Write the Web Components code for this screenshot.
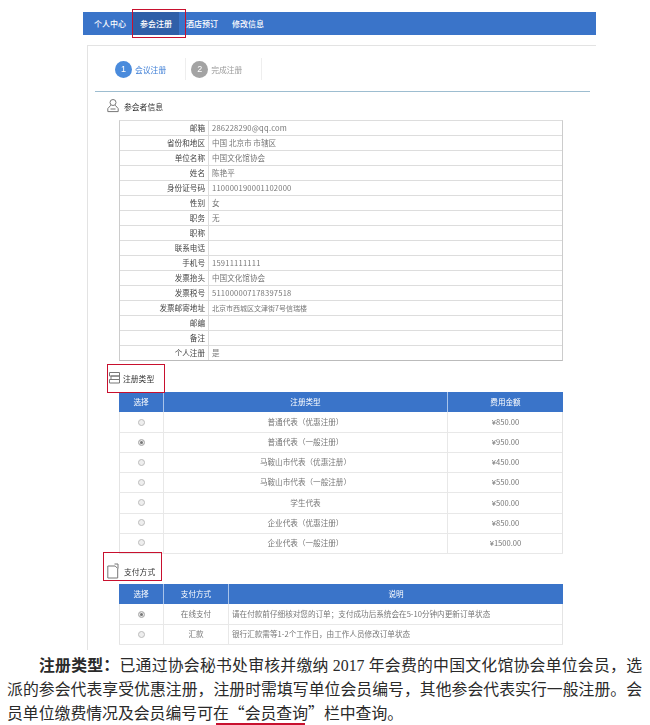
<!DOCTYPE html>
<html lang="zh">
<head>
<meta charset="utf-8">
<title>会议注册</title>
<style>
  html, body { margin: 0; background: #fff; }
  body { width: 650px; height: 725px; overflow: hidden; font-family: "Noto Sans CJK SC", "Liberation Sans", sans-serif; }
</style>
</head>
<body>
<reg-page>
  <reg-nav slot="nav">
    <nav-item>个人中心</nav-item>
    <nav-item active annotated>参会注册</nav-item>
    <nav-item>酒店预订</nav-item>
    <nav-item>修改信息</nav-item>
  </reg-nav>
  <reg-steps>
    <reg-step num="1" active>会议注册</reg-step>
    <reg-step num="2">完成注册</reg-step>
  </reg-steps>

  <section-head icon="person" style="margin-top:6px;margin-left:19px;--gap:3px">参会者信息</section-head>
  <info-table style="margin-top:6px">
    <info-row label="邮箱" wide>286228290@qq.com</info-row>
    <info-row label="省份和地区">中国 北京市 市辖区</info-row>
    <info-row label="单位名称">中国文化馆协会</info-row>
    <info-row label="姓名">陈艳平</info-row>
    <info-row label="身份证号码" wide>110000190001102000</info-row>
    <info-row label="性别">女</info-row>
    <info-row label="职务">无</info-row>
    <info-row label="职称"></info-row>
    <info-row label="联系电话"></info-row>
    <info-row label="手机号" wide>15911111111</info-row>
    <info-row label="发票抬头">中国文化馆协会</info-row>
    <info-row label="发票税号" wide>511000007178397518</info-row>
    <info-row label="发票邮寄地址" narrow>北京市西城区文津街7号信瑞楼</info-row>
    <info-row label="邮编"></info-row>
    <info-row label="备注"></info-row>
    <info-row label="个人注册">是</info-row>
  </info-table>

  <section-head icon="list" annotated="list" style="margin-top:9px;margin-left:20px;--gap:1px">注册类型</section-head>
  <data-table columns="45px 284px 115px" style="margin-top:6px">
    <data-head><span>选择</span><span>注册类型</span><span>费用金额</span></data-head>
    <data-row><reg-radio></reg-radio><span>普通代表（优惠注册）</span><span>¥850.00</span></data-row>
    <data-row><reg-radio checked></reg-radio><span>普通代表（一般注册）</span><span>¥950.00</span></data-row>
    <data-row><reg-radio></reg-radio><span>马鞍山市代表（优惠注册）</span><span>¥450.00</span></data-row>
    <data-row><reg-radio></reg-radio><span>马鞍山市代表（一般注册）</span><span>¥550.00</span></data-row>
    <data-row><reg-radio></reg-radio><span>学生代表</span><span>¥500.00</span></data-row>
    <data-row><reg-radio></reg-radio><span>企业代表（优惠注册）</span><span>¥850.00</span></data-row>
    <data-row><reg-radio></reg-radio><span>企业代表（一般注册）</span><span>¥1500.00</span></data-row>
  </data-table>

  <section-head icon="doc" annotated="doc" style="margin-top:10px;margin-left:19px;--gap:3px">支付方式</section-head>
  <data-table columns="45px 65px 334px" style="margin-top:5px">
    <data-head><span>选择</span><span>支付方式</span><span>说明</span></data-head>
    <data-row><reg-radio checked></reg-radio><span>在线支付</span><span style="text-align:left;padding-left:3px">请在付款前仔细核对您的订单；支付成功后系统会在5-10分钟内更新订单状态</span></data-row>
    <data-row><reg-radio></reg-radio><span>汇款</span><span style="text-align:left;padding-left:3px">银行汇款需等1-2个工作日，由工作人员修改订单状态</span></data-row>
  </data-table>
</reg-page>
<reg-notice>
  <b>注册类型：</b>已通过协会秘书处审核并缴纳<span style="font-family:'Liberation Serif',serif;line-height:0"> 2017 </span>年会费的中国文化馆协会单位会员，选派的参会代表享受优惠注册，注册时需填写单位会员编号，其他参会代表实行一般注册。会员单位缴费情况及会员编号可<red-mark>在“会员查询”</red-mark>栏中查询。
</reg-notice>

<script>
// Small helper, every element here is just a shadow root with its own style + markup
function defineEl(name, css, html) {
  customElements.define(name, class extends HTMLElement {
    constructor() {
      super();
      this.attachShadow({ mode: 'open' });
    }
    connectedCallback() {
      const markup = typeof html === 'function' ? html(this) : html;
      this.shadowRoot.innerHTML = `<style>${css}</style>${markup}`;
    }
  });
}

// Page shell
defineEl('reg-page', `
  :host { display: block; width: 513px; margin-left: 83px; padding-top: 12px; height: 638px; }
  .card { margin: 10px 0 0 4px; border-top: 1px solid #e3e3e3; border-left: 1px solid #e3e3e3; height: 604px; filter: blur(.25px); }
`, `<slot name="nav"></slot><div class="card"><slot></slot></div>`);

// Top navigation
defineEl('reg-nav', `
  :host { display: flex; height: 23px; background: #3a74c9; padding-left: 4px; }
`, `<slot></slot>`);

defineEl('nav-item', `
  :host { display: block; position: relative; height: 23px; line-height: 23px; padding: 0 7px; font-size: 8px; font-weight: 500; color: #fff; }
  :host([active]) { background: #2f5fa8; }
  .note { position: absolute; left: -1px; top: -3px; width: 52px; height: 27px; border: 1px solid #c8102e; }
`, el => `<slot></slot>${el.hasAttribute('annotated') ? '<i class="note"></i>' : ''}`);

// Step indicator
defineEl('reg-steps', `
  :host { display: flex; height: 45px; width: 475px; margin-left: 7px; border-bottom: 1px solid #9dbdd0; padding-left: 20px; }
`, `<slot></slot>`);

defineEl('reg-step', `
  :host { display: flex; align-items: center; height: 22px; margin-top: 12px; padding-right: 19px; margin-right: 5px; gap: 3px; font-size: 7.8px; color: #9a9a9a; border-right: 1px solid #eee; }
  :host([active]) { color: #3f7fd6; }
  b { width: 17px; height: 17px; border-radius: 50%; background: #a3a3a3; color: #fff; font: 400 9px/17px "Liberation Sans", sans-serif; text-align: center; }
  :host([active]) b { background: #4a8bdc; }
`, el => `<b>${el.getAttribute('num')}</b><slot></slot>`);

// Section heading with outline icon
const headIcons = {
  person: `<circle cx="6" cy="4.5" r="3"/><path d="M3.8 7.2.8 10.6v3h10.4v-3L8.2 7.2"/><path d="M3.5 11h5"/>`,
  list: `<path d="M1.5 2.5h10v3.5h-10zM3 6h8.5v3.5H3zM1.5 9.5h10v3.5h-10z"/>`,
  doc: `<path d="M.8 3h7.4l2.5 2.5v9.5H.8z"/><path d="M7.5 1h3.5v4.5"/>`
};
defineEl('section-head', `
  :host { display: flex; position: relative; align-items: center; gap: var(--gap, 3px); height: 16px; font-size: 7.8px; color: #333; }
  svg { width: 14px; height: 16px; fill: none; stroke: #777; stroke-width: 1; flex: none; }
  .note { position: absolute; border: 1px solid #c8102e; }
  .list { left: -1px; top: -6px; width: 56px; height: 27px; }
  .doc { left: -4px; top: -11px; width: 57px; height: 27px; }
`, el => {
  const a = el.getAttribute('annotated');
  return `<svg viewBox="0 0 14 16">${headIcons[el.getAttribute('icon')]}</svg><slot></slot>${a ? `<i class="note ${a}"></i>` : ''}`;
});

// Participant info table
defineEl('info-table', `
  :host { display: block; width: 444px; margin-left: 31px; border-top: 1px solid #ddd; border-left: 1px solid #ccc; border-right: 1px solid #ccc; border-bottom: 1px solid #bbb; box-sizing: border-box; }
`, `<slot></slot>`);

defineEl('info-row', `
  :host { display: grid; grid-template-columns: 89px 1fr; height: 15px; box-sizing: border-box; border-bottom: 1px solid #ddd; font-size: 7.6px; line-height: 14px; color: #777; }
  :host(:last-child) { border-bottom: 0; height: 14px; }
  .l { text-align: right; padding-right: 3px; color: #444; border-right: 1px solid #ddd; }
  .v { padding-left: 3px; }
  :host([wide]) .v { letter-spacing: .2px; }
  :host([narrow]) .v { font-size: 7px; }
`, el => `<div class="l">${el.getAttribute('label')}</div><div class="v"><slot></slot></div>`);

// Blue header tables, the column widths go down to the rows as a custom property
defineEl('data-table', `
  :host { display: block; width: 444px; margin-left: 31px; }
`, el => {
  el.style.setProperty('--cols', el.getAttribute('columns'));
  return `<slot></slot>`;
});

defineEl('data-head', `
  :host { display: grid; grid-template-columns: var(--cols); height: 20px; background: #3a74c9; color: #fff; font-size: 7.6px; line-height: 20px; text-align: center; }
  ::slotted(span) { border-right: 1px solid #a9c4ea; }
  ::slotted(span:last-child) { border-right: 0; }
`, `<slot></slot>`);

defineEl('data-row', `
  :host { display: grid; grid-template-columns: var(--cols); height: 20px; border-bottom: 1px solid #e8e8e8; margin-bottom: -.85px; color: #777; font-size: 7.6px; line-height: 20px; text-align: center; box-shadow: inset 1px 0 #e4e4e4, inset -1px 0 #e4e4e4; }
  ::slotted(span) { border-right: 1px solid #e8e8e8; min-width: 0; white-space: nowrap; }
  ::slotted(span:last-child) { border-right: 0; }
`, `<slot></slot>`);

defineEl('reg-radio', `
  :host { display: flex; align-items: center; justify-content: center; border-right: 1px solid #e8e8e8; }
  i { width: 5px; height: 5px; border: 1px solid #bbb; border-radius: 50%; background: #eee; }
  :host([checked]) i { background: #777; box-shadow: inset 0 0 0 1px #eee; }
`, `<i></i>`);

// Paragraph under the screenshot
defineEl('reg-notice', `
  :host { display: block; width: 635px; margin-left: 7px; margin-top: 3px; font-size: 15.85px; line-height: 24px; color: #2a2a2a; text-align: justify; text-indent: 32px; }
`, `<slot></slot>`);

defineEl('red-mark', `
  :host { display: inline; position: relative; }
  i { position: absolute; left: 3px; width: 89px; bottom: -1px; height: 2px; background: #c8102e; }
`, `<slot></slot><i></i>`);
</script>
</body>
</html>
